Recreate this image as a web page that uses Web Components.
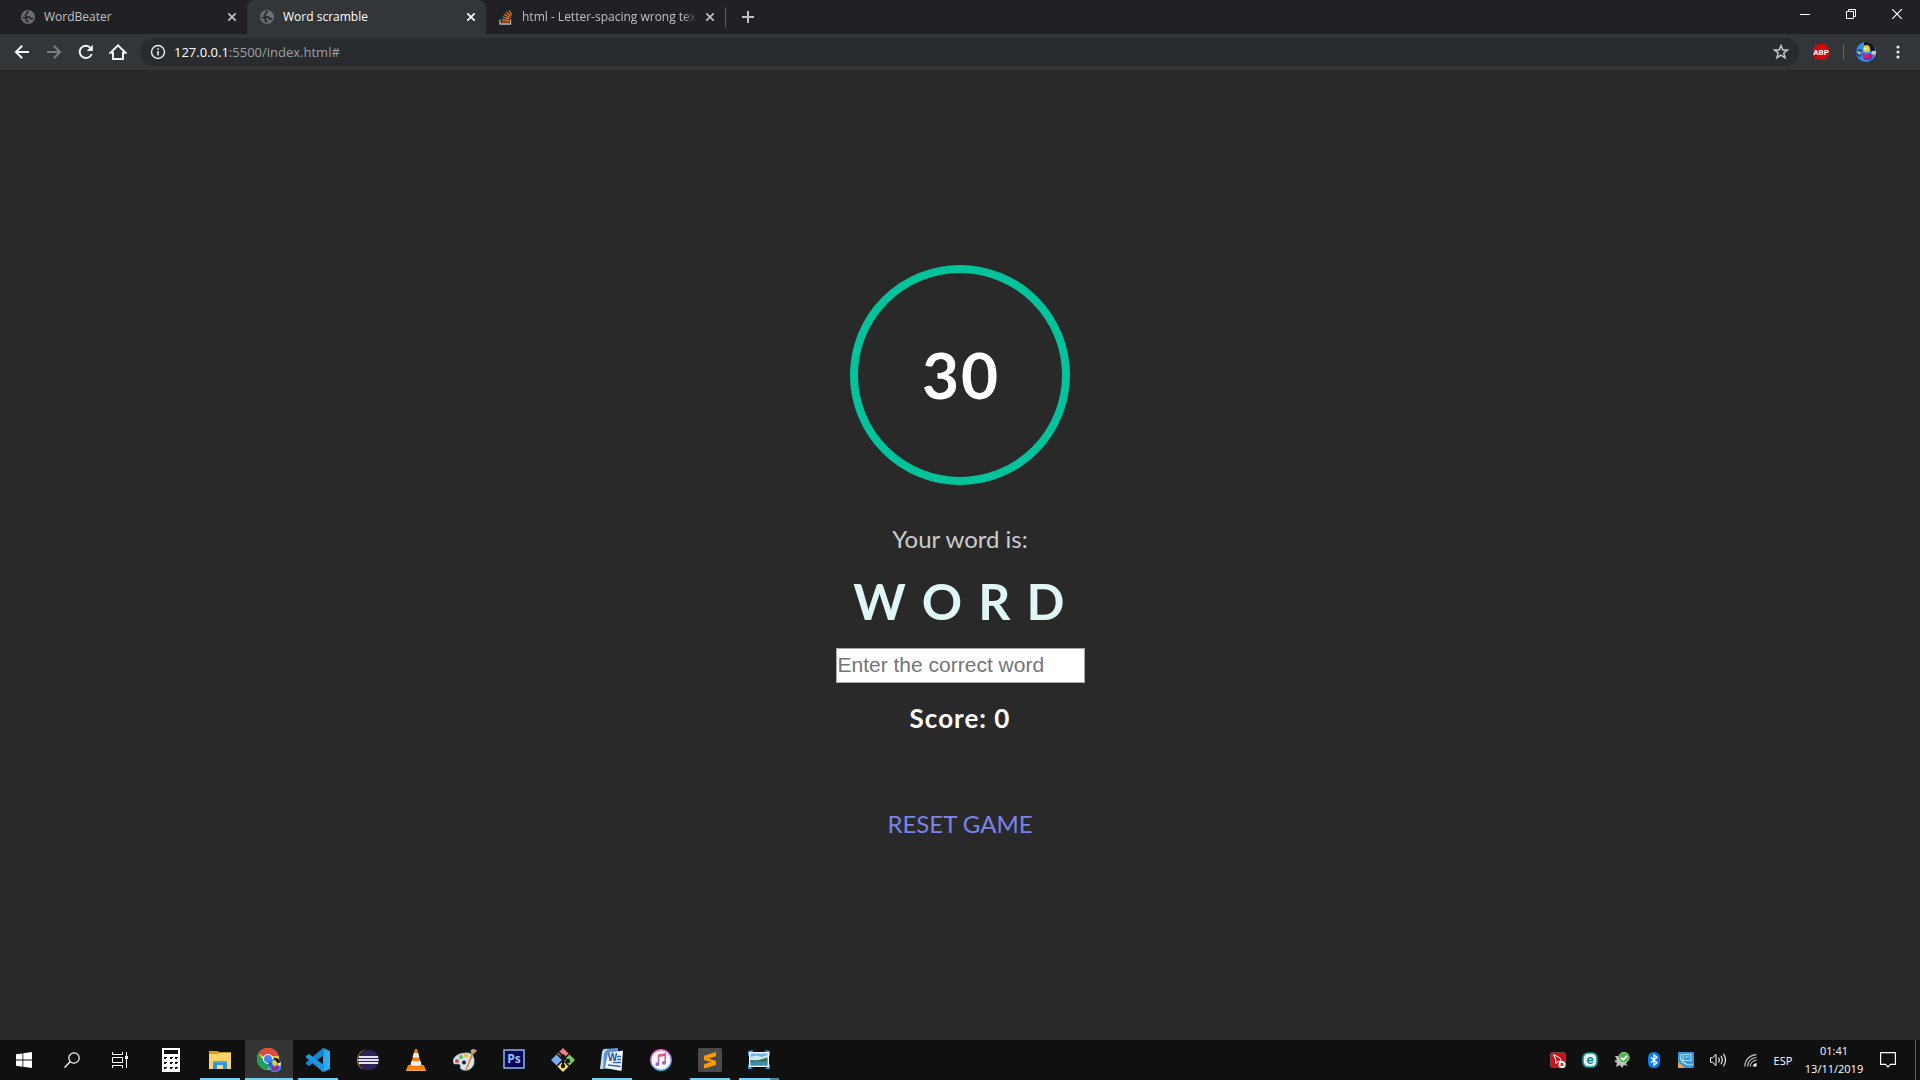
<!DOCTYPE html>
<html lang="en">
<head>
<meta charset="utf-8">
<title>Word scramble</title>
<style>
  html, body { height: 100%; }
  body { margin: 0; background: #292929; font-family: "Open Sans", "Noto Sans", sans-serif; }
</style>
</head>
<body>
<desktop-shell></desktop-shell>

<script>
const ICONS = {
  globe: ['0 0 14 14', '<circle cx="7" cy="7" r="7" fill="#6b6e72"/><path d="M7.800 1.700Q5.500 2 5.800 3.600L4.200 5.300 5.500 6.800 8.500 7.200 9.600 8.800 12.200 8.600M1.700 7.300 4.600 8 5.800 9.600 5.200 10.800 7.400 12.200" fill="none" stroke="#26282b" stroke-width="1.700" stroke-linejoin="round"/>'],
  stack: ['0 0 14 15', '<path d="M1 9.500V14H11.500V9.500" fill="none" stroke="#bcbbbb" stroke-width="1.300"/><path d="M3 12H9.800M3 9.700 9.900 10.600M3.500 7 10.200 8.900M5 4.300 10.900 7.800M7.200 1.800 11.700 6.600M10.200 .6 12.600 5.300" stroke="#f48024" stroke-width="1.200"/>'],
  x: ['0 0 10 10', '<path d="M1.300 1.300 8.700 8.700M8.700 1.300 1.300 8.700" stroke="currentColor" stroke-width="1.700"/>'],
  plus: ['0 0 12 12', '<path d="M6 0V12M0 6H12" stroke="currentColor" stroke-width="2"/>'],
  back: ['0 0 16 16', '<path d="M15 8H2.500M8.200 1.700 1.900 8 8.200 14.300" fill="none" stroke="currentColor" stroke-width="2"/>'],
  forward: ['0 0 16 16', '<path d="M1 8H13.500M7.800 1.700 14.100 8 7.800 14.300" fill="none" stroke="currentColor" stroke-width="2"/>'],
  reload: ['0 0 16 16', '<path d="M13.700 10A6.200 6.200 0 1 1 12.600 3.800" fill="none" stroke="currentColor" stroke-width="2"/><path d="M14.900 .8V7H8.700Z" fill="currentColor"/>'],
  home: ['0 0 18 18', '<path d="M1.500 9.700 9 2.300 16.500 9.700H14V16H4V9.700Z" fill="none" stroke="currentColor" stroke-width="2"/>'],
  info: ['0 0 16 16', '<circle cx="8" cy="8" r="6.500" fill="none" stroke="#e8eaed" stroke-width="1.400"/><path d="M8 7V11.600M8 4.200V5.800" stroke="#e8eaed" stroke-width="1.600"/>'],
  star: ['0 0 16 16', '<path d="M8 1.600 9.800 6H14.400L10.800 9 12.100 13.700 8 11.100 3.900 13.700 5.200 9 1.600 6H6.200Z" fill="none" stroke="#c3c7ca" stroke-width="1.500"/>'],
  abp: ['0 0 18 18', '<path d="M5.500 1H12.500L17 5.500V12.500L12.500 17H5.500L1 12.500V5.500Z" fill="#d00b0b"/><text x="9" y="12" text-anchor="middle" font-family="Roboto" font-size="8" font-weight="700" fill="#fff">ABP</text>'],
  avatar: ['0 0 20 20', '<clipPath id="c"><circle cx="10" cy="10" r="10"/></clipPath><g clip-path="url(#c)"><path d="M0 0H20V20H0Z" fill="#3291ef"/><path d="M0 8 6 7 5 15 0 14Z" fill="#174a91"/><path d="M8 0H17L19 8 16 11 13 4 8 3Z" fill="#171317"/><path d="M8 4 12 3 14 6 13 10 9 10 7 8Z" fill="#f3cf25"/><path d="M8 6.500H10.500" stroke="#fff" stroke-width="1.600"/><path d="M6 11 9 12.500 15 11 17 14 15 18 8 18Z" fill="#8d26a5"/><path d="M8 13 14 12 13 16 8 15.500Z" fill="#e31d4d"/><path d="M16 9H20V13L15 12Z" fill="#d9c4ac"/><path d="M0 9 5 10 4 13Z" fill="#e4c37d"/></g>'],
  dots: ['0 0 4 14', '<circle cx="2" cy="2" r="1.600" fill="#e8eaed"/><circle cx="2" cy="7" r="1.600" fill="#e8eaed"/><circle cx="2" cy="12" r="1.600" fill="#e8eaed"/>'],
  minimize: ['0 0 10 10', '<path d="M0 5.500H10" stroke="#fff"/>'],
  restore: ['0 0 10 10', '<path d="M.5 2.500H7.500V9.500H.5ZM2.500 2.500V.5H9.500V7.500H7.500" fill="none" stroke="#fff"/>'],
  quit: ['0 0 10 10', '<path d="M0 0 10 10M10 0 0 10" stroke="#fff" stroke-width="1.200"/>'],
  start: ['0 0 16 16', '<path d="M0 2.300 6.500 1.400V7.600H0ZM7.300 1.300 16 0V7.600H7.300ZM0 8.400H6.500V14.700L0 13.800ZM7.300 8.400H16V16L7.300 14.800Z" fill="#fff"/>'],
  search: ['0 0 16 16', '<circle cx="10" cy="6" r="5.200" fill="none" stroke="#fff" stroke-width="1.200"/><path d="M6.200 9.800.5 15.500" stroke="#fff" stroke-width="1.400"/>'],
  tasks: ['0 0 16 16', '<path d="M.5 0V2.500H10.500V0M.5 5.500H10.500V10.500H.5ZM.5 16V13.500H10.500V16M14.500 0V16" fill="none" stroke="#fff"/><path d="M13 4H16V7H13Z" fill="#fff"/>'],
  calc: ['0 0 18 24', '<path d="M0 0H18V24H0Z" fill="#fff"/><path d="M2 2H16V6H2ZM2 9H5V10H4V11H2ZM8 9H11V10H10V11H8ZM13 9H16V10H15V11H13ZM2 14H5V15H4V16H2ZM8 14H11V15H10V16H8ZM13 14H16V15H15V16H13ZM2 19H5V20H4V21H2ZM8 19H11V20H10V21H8ZM13 19H16V20H15V21H13Z" fill="#101010"/>'],
  folder: ['0 0 22 18', '<path d="M0 0H9L10 1.500H22V18H0Z" fill="#e29b12"/><path d="M0 3H9L10 1.500H22V18H0Z" fill="#fbd36b"/><path d="M4 10H18V18H14V14H8V18H4Z" fill="#2f93d8"/><path d="M4 10H18V12H4Z" fill="#4aa9e6"/><path d="M8 14H14V18H8Z" fill="#f9d680"/>'],
  chrome: ['0 0 24 26', '<circle cx="11" cy="12" r="11" fill="#f7cf45"/><path d="M11 12 1.500 6.500A11 11 0 0 1 21.600 9H11Z" fill="#dc4a3d"/><path d="M1.500 6.500A11 11 0 0 0 10.500 23L14 15 11 12 7 14Z" fill="#1f9e5b"/><circle cx="11" cy="12" r="5" fill="#fff"/><circle cx="11" cy="12" r="4" fill="#4285f4"/><circle cx="18" cy="18.500" r="6.800" fill="#308ce9"/><path d="M16 10.500 21 11.500 24 17 21.500 17.500 18 13Z" fill="#19151b"/><path d="M15 14.500 18 13 20.500 16 19 19 16 18Z" fill="#f2cf22"/><path d="M12 14 15 16 14 20 11.500 18Z" fill="#245db0"/><path d="M14 19 18 20 22 18 21.500 22 19 24 15 23Z" fill="#8a21a0"/><path d="M16 20 20 19.500 19 22.500 16 22Z" fill="#e51a45"/><path d="M21 16 24.500 15.500V18L21 19Z" fill="#e8d9cb"/>'],
  code: ['0 0 24 24', '<path d="M17 0 24 3V21L17 24Z" fill="#2eaaf2"/><path d="M17 0 18 1V7L3 18 0 16V14.500Z" fill="#1686ce"/><path d="M0 8 3 6 18 17V23L17 24 0 9.500Z" fill="#1b96df"/>'],
  eclipse: ['0 0 24 22', '<path d="M10.500 .3A11 11 0 0 0 10.500 21.700Q3 18 3 11T10.500 .3Z" fill="#f7941e"/><circle cx="13.500" cy="11" r="10.300" fill="#2c2255"/><path d="M3.800 8H23.200M3.300 11H23.700M3.800 14H23.200" stroke="#e4e4ef" stroke-width="1.900"/>'],
  vlc: ['0 0 20 22', '<path d="M2 16H18L20 22H0Z" fill="#f58412"/><path d="M9 0H11L16 18Q10 20 4 18Z" fill="#f37d12"/><path d="M7.800 4H12.200L13.400 8.500H6.600ZM5.500 12H14.500L15.500 16Q10 18 4.500 16Z" fill="#f0eeec"/><path d="M0 21H20V22H0Z" fill="#ffad47"/>'],
  paint: ['0 0 24 24', '<path d="M12 5C19 4 22 9 21 15 20 22 12 24 8 21 6 19 9 17 6 16 3 16 0 17 0 13 1 8 6 5 12 5Z" fill="#cfe4f0" stroke="#98b6c8" stroke-width=".6"/><circle cx="4" cy="13" r="2" fill="#e44d43"/><circle cx="8" cy="9" r="2" fill="#68b944"/><circle cx="13" cy="7.500" r="2" fill="#f1b82d"/><circle cx="11" cy="14.500" r="1.900" fill="#17202a"/><path d="M18.700 5 20.700 6 13.500 22.500 12 23 12.500 21Z" fill="#e6882b"/><path d="M18.300 5.500Q17 3 18 2L20 .8 24 2.500 22 5 20 6Z" fill="#c2a077"/>'],
  ps: ['0 0 22 22', '<path d="M1 1H21V19H1Z" fill="#0b0557" stroke="#8ab8e8" stroke-width="1.500"/><text x="11" y="14" text-anchor="middle" font-family="Open Sans" font-size="12" font-weight="700" fill="#90c6f7">Ps</text>'],
  git: ['0 0 24 24', '<path d="M12 0 18 6 12 12 6 6Z" fill="#f37c7c"/><path d="M6 6 12 12 6 18 0 12Z" fill="#7baaf7"/><path d="M18 6 24 12 18 18 12 12Z" fill="#80c95b"/><path d="M12 12 18 18 12 24 6 18Z" fill="#f6df78"/><path d="M6 6 18 18M18 6 6 18" stroke="#101010" stroke-width="1.500"/><path d="M8 4 12 9V18M12 9 17 13" fill="none" stroke="#17130f" stroke-width="2"/><circle cx="12" cy="8.500" r="2.200" fill="#17130f"/><circle cx="12" cy="18" r="2.200" fill="#17130f"/><circle cx="17" cy="13" r="2.200" fill="#17130f"/>'],
  word: ['0 0 24 24', '<path d="M3 1 18 0V20L1 21Z" fill="#5f92d2"/><path d="M0 21 2 4Q3 1 6 1L9 1Q5 2 4 6L3 21Z" fill="#c4dcf4"/><path d="M8 5 23 2.500 21.500 23 5 20Z" fill="#f1f5fb"/><path d="M17 8.500H21M17 11.500H21M13 14.500H21M8 17 20.500 18.500" stroke="#3565ad" stroke-width="1.400"/><path d="M8 6 17 5 16 13.500 8 13Z" fill="#edf2fa"/><text x="12.500" y="13" text-anchor="middle" font-family="Liberation Sans" font-size="10" font-weight="700" fill="#254e9b">W</text>'],
  music: ['0 0 22 22', '<linearGradient id="m" x2=".3" y2="1"><stop stop-color="#fb5bc5"/><stop offset=".5" stop-color="#c76df4"/><stop offset="1" stop-color="#34b9ed"/></linearGradient><linearGradient id="n" x2="0" y2="1"><stop stop-color="#f3537a"/><stop offset="1" stop-color="#8469e5"/></linearGradient><circle cx="11" cy="11" r="10.200" fill="#fafafa" stroke="url(#m)" stroke-width="1.400"/><path d="M7.800 5.500 16 4V13.500A2 1.900 0 1 1 14.500 12V7L9.300 8V15A2 1.900 0 1 1 7.800 13.400Z" fill="url(#n)"/>'],
  sublime: ['0 0 24 24', '<rect width="24" height="24" rx="1.500" fill="#4a4a4a"/><path d="M18 4V8.200L10.500 10.600 18 13V17L6 20.500V16.300L13 14.100 6 12V7.700Z" fill="#ff9800"/>'],
  photo: ['0 0 24 22', '<path d="M1 2 6 1 5 5 1 7ZM18 1 23 2V7L19 5ZM1 15 6 20H1ZM23 15V20H18Z" fill="#3a8fcc"/><path d="M2 3H22V18H2Z" fill="#f0f4f6"/><path d="M3.500 4.500H20.500V16.500H3.500Z" fill="#70b5e4"/><path d="M3.500 8 9 6.500 15 8 20.500 6V11H3.500Z" fill="#d3e7f0"/><path d="M3.500 11 10 11.500 20.500 8.500V13H3.500Z" fill="#3b704e"/><path d="M3.500 12.500H20.500V16.500H3.500Z" fill="#3a8ab0"/>'],
  redtool: ['0 0 16 16', '<rect x=".5" y=".5" width="15" height="15" rx="2" fill="#c9131a" stroke="#754547"/><path d="M3.500 2.500 10 6 11.500 10 8.500 9 6 11.500 5.500 7Z" fill="none" stroke="#fff"/><circle cx="12" cy="12.500" r="3.500" fill="#fff"/><path d="M10.500 11H13.500V14H10.500Z" fill="#df2e2e"/>'],
  eset: ['0 0 16 16', '<rect x="1" y="1" width="14" height="14" rx="5" fill="#e9f5f5" stroke="#0b969b" stroke-width="1.700"/><text x="8" y="12" text-anchor="middle" font-family="Liberation Sans" font-size="13" font-weight="700" fill="#07858c">e</text>'],
  gear: ['0 0 16 16', '<path d="M1 4H4L5 6 8 3 10 8 13 9 12 12 14 14 10 13 8 16 6 13 2 15 3 11 0 9 3 8Z" fill="#bfc2c0"/><circle cx="10" cy="5.500" r="5.200" fill="#4db649" stroke="#b9dfb5" stroke-width=".8"/><path d="M7 5.500 9.300 7.800 13 3.800" fill="none" stroke="#fff" stroke-width="1.800"/>'],
  bluetooth: ['0 0 12 16', '<rect width="12" height="16" rx="5.500" fill="#0a7cf0"/><path d="M2.800 5.200 9 10.800 6 13.300V2.700L9 5.200 2.800 10.800" fill="none" stroke="#fff" stroke-width="1.200"/>'],
  intel: ['0 0 16 16', '<rect width="16" height="16" rx="1" fill="#3796d8"/><path d="M5 2.500H13V8.500H5ZM2 6C5 13 12 14 15 12M3 2C1 6 4 11 9 12M7 5H11" fill="none" stroke="#a5dcfa" stroke-width="1.100"/><path d="M0 10 7 16H0Z" fill="#e8a847"/>'],
  volume: ['0 0 17 14', '<path d="M.5 4.800H2.500L6 1.500V12.500L2.500 9.200H.5Z" fill="none" stroke="#fff"/><path d="M8.500 4.500Q10 7 8.500 9.500M11 2.700Q13.500 7 11 11.300M13.500 .8Q17.500 7 13.500 13.200" fill="none" stroke="#fff" stroke-width="1.100"/>'],
  wifi: ['0 0 13 13', '<path d="M.8 12.500C1 5.500 6 .8 12.500 .6M3.500 12.500C3.800 7.300 7.500 3.800 12.500 3.500M6.200 12.500C6.300 9 9 6.500 12.500 6.200" fill="none" stroke="#b9b9b9" stroke-width="1.200"/><path d="M9 12.500Q9.200 9.500 12.500 9V12.500Z" fill="#fff"/>'],
  notice: ['0 0 16 16', '<path d="M.6 .6H15.400V12.400H10.500L8 15 5.500 12.400H.6Z" fill="none" stroke="#fff" stroke-width="1.200"/>']
};

class UiIcon extends HTMLElement {
  connectedCallback() {
    const [box, art] = ICONS[this.getAttribute('name')];
    const [, , w, h] = box.split(' ');
    this.attachShadow({ mode: 'open' }).innerHTML =
      `<style>:host{display:block;flex:none}svg{display:block}</style><svg width="${w}" height="${h}" viewBox="${box}" aria-hidden="true">${art}</svg>`;
  }
}
customElements.define('ui-icon', UiIcon);

const define = (name, html) => {
  const template = document.createElement('template');
  template.innerHTML = html;
  customElements.define(name, class extends HTMLElement {
    constructor() {
      super();
      this.attachShadow({ mode: 'open' }).append(template.content.cloneNode(true));
    }
  });
};
const button = 'button{display:flex;align-items:center;justify-content:center;margin:0;padding:0;border:0;background:none;color:inherit;font:inherit}';

define('browser-tab', `
<style>
  :host { display: flex; flex: 0 1 239px; min-width: 0; height: 34px; box-sizing: border-box; align-items: center; padding: 0 10px 0 13px; color: #bdc1c6; font-size: 12px; }
  :host([active]) { background: #323639; color: #fff; border-radius: 8px 8px 0 0; }
  .title { flex: 1; min-width: 0; margin: 0 8px 0 9px; overflow: hidden; white-space: nowrap; line-height: 18px; }
  :host([faded]) .title { -webkit-mask: linear-gradient(90deg, #000 92%, transparent); mask: linear-gradient(90deg, #000 92%, transparent); }
  ${button}
</style>
<slot name="icon"></slot><span class="title"><slot></slot></span><button aria-label="Close tab"><ui-icon name="x"></ui-icon></button>`);

define('tab-strip', `
<style>
  :host { display: flex; height: 34px; background: #202124; color: #bdc1c6; }
  nav { display: flex; flex: 1; min-width: 0; padding-left: 8px; }
  .sep { width: 1px; height: 20px; margin-top: 7px; background: #5a5d61; }
  .new { width: 44px; height: 34px; }
  .window { display: flex; }
  .window button { width: 46px; height: 28px; }
  ${button}
</style>
<nav aria-label="Tabs">
  <browser-tab><ui-icon slot="icon" name="globe"></ui-icon>WordBeater</browser-tab>
  <browser-tab active><ui-icon slot="icon" name="globe"></ui-icon>Word scramble</browser-tab>
  <browser-tab faded><ui-icon slot="icon" name="stack"></ui-icon>html - Letter-spacing wrong text</browser-tab>
  <span class="sep"></span>
  <button class="new" aria-label="New tab"><ui-icon name="plus"></ui-icon></button>
</nav>
<div class="window">
  <button aria-label="Minimize"><ui-icon name="minimize"></ui-icon></button>
  <button aria-label="Restore"><ui-icon name="restore"></ui-icon></button>
  <button aria-label="Close"><ui-icon name="quit"></ui-icon></button>
</div>`);

define('browser-toolbar', `
<style>
  :host { display: flex; align-items: center; height: 36px; box-sizing: border-box; padding: 0 6px; background: #323639; color: #f1f3f4; }
  ${button}
  button { width: 32px; height: 28px; }
  .off { color: #7b7e81; }
  .address { display: flex; flex: 1; align-items: center; height: 28px; margin: 0 6px; padding-left: 10px; border-radius: 14px; background: #282c2f; font-size: 13px; color: #9aa0a6; }
  .url { flex: 1; margin-left: 8px; line-height: 20px; }
  b { font-weight: 400; color: #fff; }
  .sep { width: 1px; height: 16px; margin: 0 6px; background: #5f6368; }
  .address button { width: 36px; }
</style>
<button aria-label="Back"><ui-icon name="back"></ui-icon></button>
<button class="off" aria-label="Forward"><ui-icon name="forward"></ui-icon></button>
<button aria-label="Reload"><ui-icon name="reload"></ui-icon></button>
<button aria-label="Home"><ui-icon name="home"></ui-icon></button>
<div class="address"><ui-icon name="info"></ui-icon><span class="url"><b>127.0.0.1</b>:5500/index.html#</span><button aria-label="Bookmark"><ui-icon name="star"></ui-icon></button></div>
<button aria-label="Adblock Plus"><ui-icon name="abp"></ui-icon></button>
<span class="sep"></span>
<button aria-label="Profile"><ui-icon name="avatar"></ui-icon></button>
<button aria-label="Menu"><ui-icon name="dots"></ui-icon></button>`);

define('count-ring', `
<style>
  :host { display: flex; align-items: center; justify-content: center; width: 220px; height: 220px; box-sizing: border-box; padding-left: 2px; border: 8px solid #03c39c; border-radius: 50%; color: #fff; font-size: 64px; font-weight: 700; letter-spacing: 2px; }
</style><slot></slot>`);

define('word-game', `
<style>
  :host { display: flex; flex-direction: column; align-items: center; font-family: Lato, sans-serif; font-size: 24px; line-height: 30px; }
  p, h1, h2 { margin: 0; }
  .lead { margin-top: 39px; color: #ccc; }
  h1 { margin-top: 17px; font-size: 50px; line-height: 60px; font-weight: 700; letter-spacing: 2px; color: #e0f7f7; }
  input { width: 249px; height: 35px; box-sizing: border-box; margin: 17px 0 19px; padding: 1px; border: 1px solid #a9a9a9; border-radius: 0; background: #fff; color: #222; font: 21px "Liberation Sans", sans-serif; }
  input::placeholder { color: #757575; }
  h2 { font-size: 26px; line-height: 32px; font-weight: 700; letter-spacing: 1px; color: #fff; }
  a { margin-top: 69px; padding: 6px 6px 7px; color: #7983ea; text-decoration: none; }
</style>
<count-ring>30</count-ring>
<p class="lead">Your word is:</p>
<h1>W O R D</h1>
<input type="text" aria-label="Enter the correct word" placeholder="Enter the correct word">
<h2>Score: 0</h2>
<a href="#">RESET GAME</a>`);

define('task-button', `
<style>
  :host { display: flex; width: 48px; height: 40px; }
  ${button}
  button { width: 100%; }
  :host([active]) { background: #343434; }
  :host([open]) button { background: linear-gradient(#76d0f5, #76d0f5) center bottom / 40px 2px no-repeat; }
  :host([active]) button { background-size: 100% 2px; }
  :host([multi]) button { background: linear-gradient(90deg, #76d0f5 31px, #4e8aa3 31px) center bottom / 40px 2px no-repeat; }
</style><button><slot></slot></button>`);

define('task-bar', `
<style>
  :host { display: flex; height: 40px; justify-content: space-between; background: #101010; color: #fff; font-size: 12px; }
  .group, .apps, .tray { display: flex; }
  .apps { gap: 1px; margin-left: 3px; }
  .tray { align-items: center; }
  ${button}
  .tray button { width: 32px; height: 40px; }
  .tray .lang { width: 34px; font-size: 11px; }
  .clock { display: flex; flex-direction: column; width: 68px; line-height: 18px; font-size: 11px; text-align: center; }
  .tray .notice { width: 40px; margin-right: 7px; }
  .peek { width: 4px; height: 40px; border-left: 1px solid #5b5b5b; }
</style>
<div class="group">
  <task-button><ui-icon name="start"></ui-icon></task-button>
  <task-button><ui-icon name="search"></ui-icon></task-button>
  <task-button><ui-icon name="tasks"></ui-icon></task-button>
  <div class="apps">
    <task-button><ui-icon name="calc"></ui-icon></task-button>
    <task-button open><ui-icon name="folder"></ui-icon></task-button>
    <task-button open active><ui-icon name="chrome"></ui-icon></task-button>
    <task-button open><ui-icon name="code"></ui-icon></task-button>
    <task-button><ui-icon name="eclipse"></ui-icon></task-button>
    <task-button><ui-icon name="vlc"></ui-icon></task-button>
    <task-button><ui-icon name="paint"></ui-icon></task-button>
    <task-button><ui-icon name="ps"></ui-icon></task-button>
    <task-button><ui-icon name="git"></ui-icon></task-button>
    <task-button open><ui-icon name="word"></ui-icon></task-button>
    <task-button><ui-icon name="music"></ui-icon></task-button>
    <task-button open><ui-icon name="sublime"></ui-icon></task-button>
    <task-button multi><ui-icon name="photo"></ui-icon></task-button>
  </div>
</div>
<div class="tray">
  <button aria-label="Recorder"><ui-icon name="redtool"></ui-icon></button>
  <button aria-label="Antivirus"><ui-icon name="eset"></ui-icon></button>
  <button aria-label="Updates"><ui-icon name="gear"></ui-icon></button>
  <button aria-label="Bluetooth"><ui-icon name="bluetooth"></ui-icon></button>
  <button aria-label="Graphics"><ui-icon name="intel"></ui-icon></button>
  <button aria-label="Volume"><ui-icon name="volume"></ui-icon></button>
  <button aria-label="Network"><ui-icon name="wifi"></ui-icon></button>
  <button class="lang">ESP</button>
  <div class="clock"><span>01:41</span><span>13/11/2019</span></div>
  <button class="notice" aria-label="Notifications"><ui-icon name="notice"></ui-icon></button>
  <span class="peek"></span>
</div>`);

define('desktop-shell', `
<style>
  :host { display: flex; flex-direction: column; min-height: 100vh; }
  main { display: flex; flex: 1; align-items: center; justify-content: center; background: #292929; }
</style>
<tab-strip></tab-strip>
<browser-toolbar></browser-toolbar>
<main><word-game></word-game></main>
<task-bar></task-bar>`);
</script>
</body>
</html>
